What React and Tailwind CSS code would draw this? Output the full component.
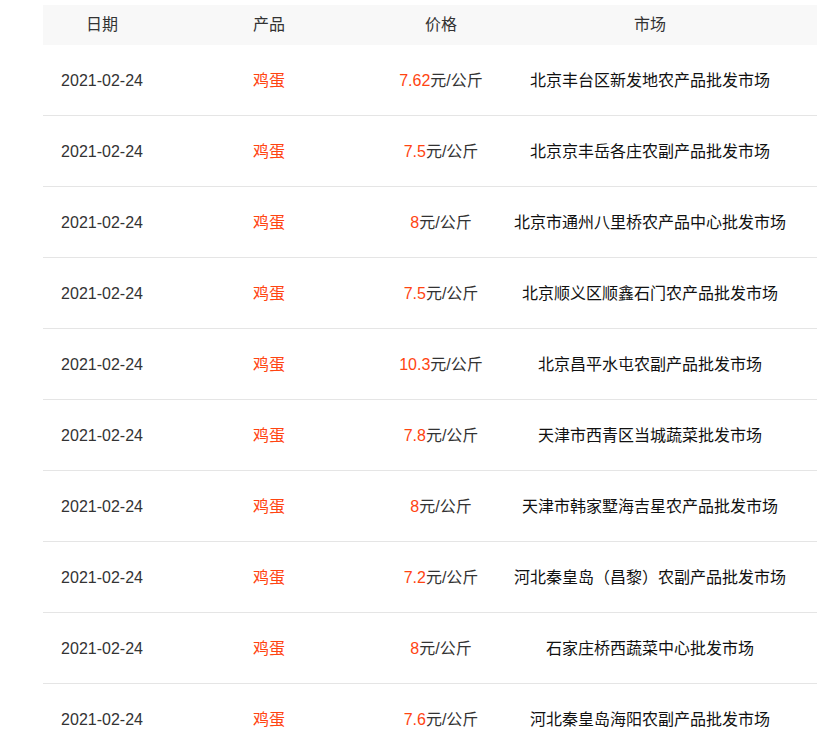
import React from 'react';

const rows = [
    { price: '7.62', market: '北京丰台区新发地农产品批发市场' },
    { price: '7.5', market: '北京京丰岳各庄农副产品批发市场' },
    { price: '8', market: '北京市通州八里桥农产品中心批发市场' },
    { price: '7.5', market: '北京顺义区顺鑫石门农产品批发市场' },
    { price: '10.3', market: '北京昌平水屯农副产品批发市场' },
    { price: '7.8', market: '天津市西青区当城蔬菜批发市场' },
    { price: '8', market: '天津市韩家墅海吉星农产品批发市场' },
    { price: '7.2', market: '河北秦皇岛（昌黎）农副产品批发市场' },
    { price: '8', market: '石家庄桥西蔬菜中心批发市场' },
    { price: '7.6', market: '河北秦皇岛海阳农副产品批发市场' },
];

const cols = 'grid grid-cols-[118px_216px_128px_290px_1fr]';

export default function App() {
    return (
        <div
            className="bg-white pt-[5px] pl-[43px] text-[16px] text-[#333] h-[745px] overflow-hidden"
            style={{ fontFamily: '"Liberation Sans", "Noto Sans CJK SC", sans-serif' }}
        >
            <div className={`${cols} h-[40px] items-center bg-[#f8f8f8] text-center`}>
                <div>日期</div>
                <div>产品</div>
                <div>价格</div>
                <div>市场</div>
                <div></div>
            </div>
            {rows.map((row, i) => (
                <div key={i} className={`${cols} h-[71px] pt-[2px] items-center border-b border-[#e5e5e5] text-center`}>
                    <div>2021-02-24</div>
                    <div className="text-[#ff4411]">鸡蛋</div>
                    <div className="whitespace-nowrap">
                        <span className="text-[#ff4411]">{row.price}</span>元/公斤
                    </div>
                    <div className="whitespace-nowrap text-[#111]">{row.market}</div>
                    <div></div>
                </div>
            ))}
        </div>
    );
}
